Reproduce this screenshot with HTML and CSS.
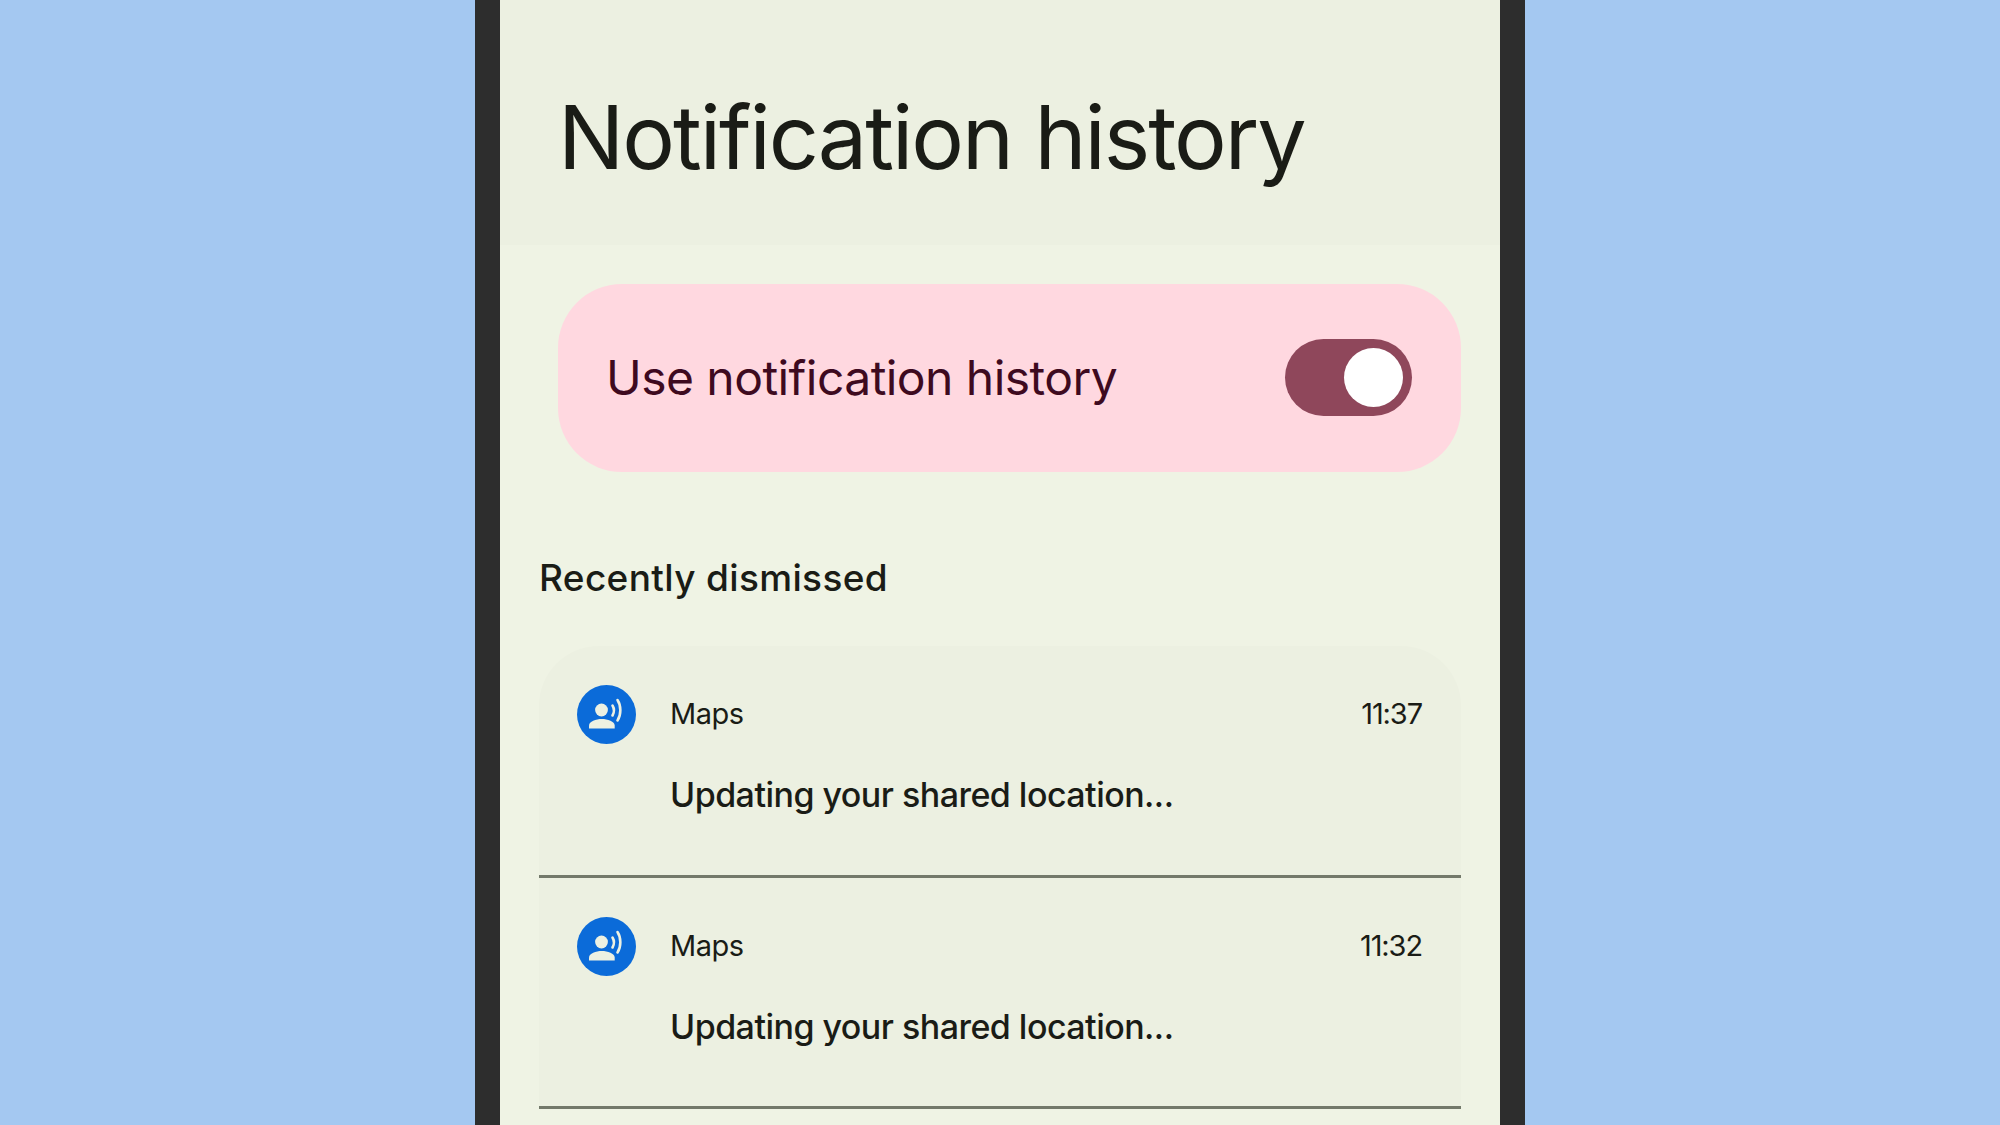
FILE: index.html
```html
<!DOCTYPE html>
<html lang="en">
<head>
<meta charset="utf-8">
<title>Notification history</title>
<link rel="stylesheet" href="styles.css">
</head>
<body>
<main class="phone">
  <header class="app-header"><h1 class="title">Notification history</h1></header>
  <section class="switch-card">
    <span class="switch-label">Use notification history</span>
    <span class="toggle"><span class="thumb"></span></span>
  </section>
  <h2 class="section-title">Recently dismissed</h2>
  <section class="list">
    <article class="item">
      <div class="item-head">
        <svg class="app-icon" viewBox="0 0 59 59" aria-hidden="true"><circle class="icon-bg" cx="29.5" cy="29.5" r="29.5"/><circle class="icon-fg" cx="24.5" cy="25" r="6.4"/><path class="icon-fg" d="M12 43.4v-3c0-3.800 7-6.300 12.800-6.300s12.900 2.500 12.900 6.300v3z"/><path class="icon-arc" d="M35.500 20.500c1.800 3 1.800 6.800 0 10"/><path class="icon-arc" d="M40.500 15c3.800 5.700 3.800 14.800 0 20.500"/></svg>
        <span class="app-name">Maps</span>
        <time class="time">11:37</time>
      </div>
      <p class="message">Updating your shared location...</p>
    </article>
    <article class="item">
      <div class="item-head">
        <svg class="app-icon" viewBox="0 0 59 59" aria-hidden="true"><circle class="icon-bg" cx="29.5" cy="29.5" r="29.5"/><circle class="icon-fg" cx="24.5" cy="25" r="6.4"/><path class="icon-fg" d="M12 43.4v-3c0-3.800 7-6.300 12.800-6.300s12.900 2.500 12.900 6.300v3z"/><path class="icon-arc" d="M35.500 20.500c1.800 3 1.800 6.800 0 10"/><path class="icon-arc" d="M40.500 15c3.800 5.700 3.800 14.800 0 20.500"/></svg>
        <span class="app-name">Maps</span>
        <time class="time">11:32</time>
      </div>
      <p class="message">Updating your shared location...</p>
    </article>
  </section>
</main>
</body>
</html>
```
FILE: styles.css
```css
* { box-sizing: border-box; }
html, body { margin: 0; height: 100%; }
body {
  background: #a4c8f1;
  display: flex;
  justify-content: center;
  overflow: hidden;
  font-family: "Inter", "Roboto", sans-serif;
  color: #1a1c16;
}
.phone {
  width: 1050px;
  height: 1125px;
  border-left: 25px solid #2d2d2d;
  border-right: 25px solid #2d2d2d;
  background: #eff3e4;
  overflow: hidden;
}
.app-header {
  height: 245px;
  background: #ecf0e1;
  padding: 0 0 0 58px;
  display: flex;
  align-items: center;
}
.title {
  margin: 28px 0 0;
  font-size: 88px;
  line-height: 1;
  font-weight: 400;
  letter-spacing: -2.05px;
  white-space: nowrap;
}
.switch-card {
  margin: 39px 39px 0 58px;
  height: 188px;
  border-radius: 64px;
  background: #ffd8e0;
  display: flex;
  align-items: center;
  justify-content: space-between;
  padding: 0 49px 2px 48px;
}
.switch-label {
  font-size: 48px;
  color: #3e0a1f;
  letter-spacing: -0.55px;
  white-space: nowrap;
}
.toggle {
  width: 127px;
  height: 77px;
  border-radius: 39px;
  background: #8f475b;
  display: flex;
  align-items: center;
  justify-content: flex-end;
  padding-right: 9px;
}
.thumb {
  width: 59px;
  height: 59px;
  border-radius: 50%;
  background: #fff;
}
.section-title {
  margin: 84px 0 0 39px;
  font-size: 37px;
  line-height: 44px;
  font-weight: 500;
  letter-spacing: 0.35px;
}
.list {
  margin: 46px 39px 0 39px;
  border-radius: 60px 60px 0 0;
  background: #ecf0e1;
}
.item {
  height: 231.500px;
  padding: 39px 39px 0 38px;
  border-bottom: 3px solid #73796a;
}
.item-head {
  display: flex;
  align-items: center;
  height: 59px;
}
.app-icon {
  width: 59px;
  height: 59px;
  flex: none;
  margin-right: 34px;
}
.icon-bg { fill: #0b6bd9; }
.icon-fg { fill: #edf1e2; }
.icon-arc { fill: none; stroke: #edf1e2; stroke-width: 2.600; stroke-linecap: round; }
.app-name { font-size: 29px; flex: 1; letter-spacing: -0.5px; margin-top: -2px; }
.time { font-size: 29px; letter-spacing: -1.1px; margin-top: -2px; }
.message {
  margin: 29px 0 0 93px;
  font-size: 34px;
  line-height: 44px;
  font-weight: 500;
  letter-spacing: -0.53px;
  white-space: nowrap;
}
```
